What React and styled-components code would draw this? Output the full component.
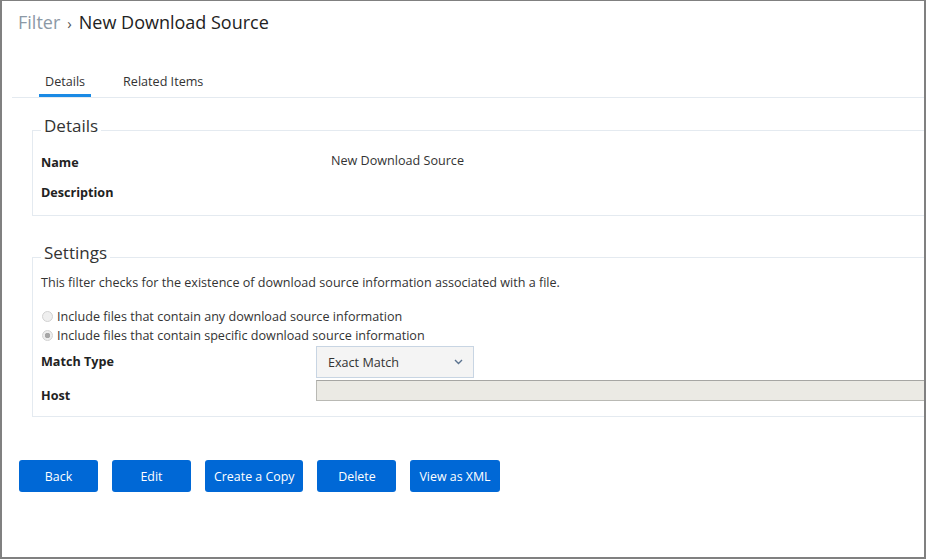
import React from "react";
import styled, { createGlobalStyle } from "styled-components";

const GlobalStyle = createGlobalStyle`
    body {
        margin: 0;
        font-family: "Open Sans", "Noto Sans", sans-serif;
        font-size: 12.6px;
        color: #333;
        background: #fff;
    }
`;

function Chevron() {
    return (
        <svg width="9" height="6" viewBox="0 0 9 6">
            <path d="M1 1 L4.5 4.5 L8 1" fill="none" stroke="#5b7390" strokeWidth="1.4" />
        </svg>
    );
}

function Radio({ checked, children }) {
    return (
        <RadioRow>
            <RadioDot checked={checked} />
            <span>{children}</span>
        </RadioRow>
    );
}

const buttons = ["Back", "Edit", "Create a Copy", "Delete", "View as XML"];

function App() {
    return (
        <Frame>
            <GlobalStyle />
            <Breadcrumb>
                <Crumb>Filter</Crumb>
                <Sep>›</Sep>
                <Title>New Download Source</Title>
            </Breadcrumb>
            <TabBar>
                <Tab active>Details</Tab>
                <Tab>Related Items</Tab>
            </TabBar>
            <Content>
                <Fieldset top={2} bottom={7}>
                    <Legend>Details</Legend>
                    <Row height={30}>
                        <Label>Name</Label>
                        <Value>New Download Source</Value>
                    </Row>
                    <Row height={30}>
                        <Label>Description</Label>
                    </Row>
                </Fieldset>
                <Fieldset gap={25} bottom={4} top={1}>
                    <Legend>Settings</Legend>
                    <Intro>
                        This filter checks for the existence of download source information associated with a file.
                    </Intro>
                    <Radios>
                        <Radio>Include files that contain any download source information</Radio>
                        <Radio checked>Include files that contain specific download source information</Radio>
                    </Radios>
                    <Row height={32} space={1}>
                        <Label>Match Type</Label>
                        <Select>
                            <span>Exact Match</span>
                            <Chevron />
                        </Select>
                    </Row>
                    <Row height={32} space={2}>
                        <Label>Host</Label>
                        <HostInput />
                    </Row>
                </Fieldset>
            </Content>
            <Actions>
                {buttons.map((b) => (
                    <Button key={b}>{b}</Button>
                ))}
            </Actions>
        </Frame>
    );
}

const Frame = styled.div`
    box-sizing: border-box;
    width: 926px;
    height: 559px;
    border: 2px solid #808080;
    border-top-width: 1px;
    overflow: hidden;
    background: #fff;
`;
const Breadcrumb = styled.div`
    display: flex;
    align-items: baseline;
    gap: 7px;
    padding: 9px 0 0 16px;
    font-size: 18px;
    line-height: 24px;
`;
const Crumb = styled.span`
    color: #8c99a6;
`;
const Sep = styled.span`
    color: #555;
    font-size: 15px;
`;
const Title = styled.span`
    color: #222;
`;
const TabBar = styled.div`
    display: flex;
    gap: 26px;
    width: 1100px;
    margin: 38px 0 0 10px;
    padding-left: 27px;
    border-bottom: 1px solid #e4eaf0;
`;
const Tab = styled.div`
    padding: 0 6px 3px;
    line-height: 18px;
    font-size: 12.6px;
    color: #333;
    border-bottom: 3px solid ${(p) => (p.active ? "#1a8ae5" : "transparent")};
`;
const Content = styled.div`
    width: 1100px;
    margin-left: 30px;
`;
const Fieldset = styled.fieldset`
    margin: ${(p) => p.gap || 16}px 0 0;
    padding: ${(p) => p.top ?? 1}px 8px ${(p) => p.bottom ?? 8}px;
    border: 1px solid #e4eaf0;
    min-width: 0;
`;
const Legend = styled.legend`
    padding: 0 3px 9px;
    font-size: 17px;
    line-height: 23px;
    color: #333;
`;
const Row = styled.div`
    display: flex;
    align-items: center;
    height: ${(p) => p.height}px;
    margin-top: ${(p) => p.space || 0}px;
`;
const Label = styled.div`
    width: 275px;
    flex: none;
    font-weight: 700;
    color: #222;
    line-height: 18px;
`;
const Value = styled.div`
    align-self: flex-start;
    padding: 4px 0 0 15px;
    line-height: 18px;
    color: #333;
`;
const Intro = styled.p`
    margin: 0;
    line-height: 18px;
`;
const Radios = styled.div`
    margin-top: 15px;
`;
const RadioRow = styled.div`
    display: flex;
    align-items: center;
    gap: 4px;
    line-height: 19px;
    padding-left: 1px;
`;
const RadioDot = styled.span`
    box-sizing: border-box;
    width: 11px;
    height: 11px;
    border-radius: 50%;
    border: 1px solid #d2d2d2;
    background: ${(p) =>
        p.checked
            ? "radial-gradient(circle, #a6a6a6 0 2.5px, #ededed 3px)"
            : "#efefef"};
`;
const Select = styled.div`
    box-sizing: border-box;
    align-self: flex-start;
    display: flex;
    align-items: center;
    justify-content: space-between;
    width: 158px;
    height: 32px;
    padding: 0 10px 0 11px;
    background: #f4f4f4;
    border: 1px solid #c8d5e3;
    color: #333;
`;
const HostInput = styled.div`
    box-sizing: border-box;
    align-self: flex-start;
    flex: 1;
    height: 21px;
    background: #ebeae4;
    border: 1px solid #b9b9b4;
    border-top-color: #a6a6a3;
`;
const Actions = styled.div`
    display: flex;
    gap: 14px;
    margin: 43px 0 0 17px;
`;
const Button = styled.button`
    min-width: 79px;
    height: 32px;
    padding: 0 9px;
    border: none;
    border-radius: 3px;
    background: #0068d6;
    color: #fff;
    font-family: "Open Sans", "Noto Sans", sans-serif;
    font-size: 12.4px;
    cursor: pointer;
`;

export default App;
